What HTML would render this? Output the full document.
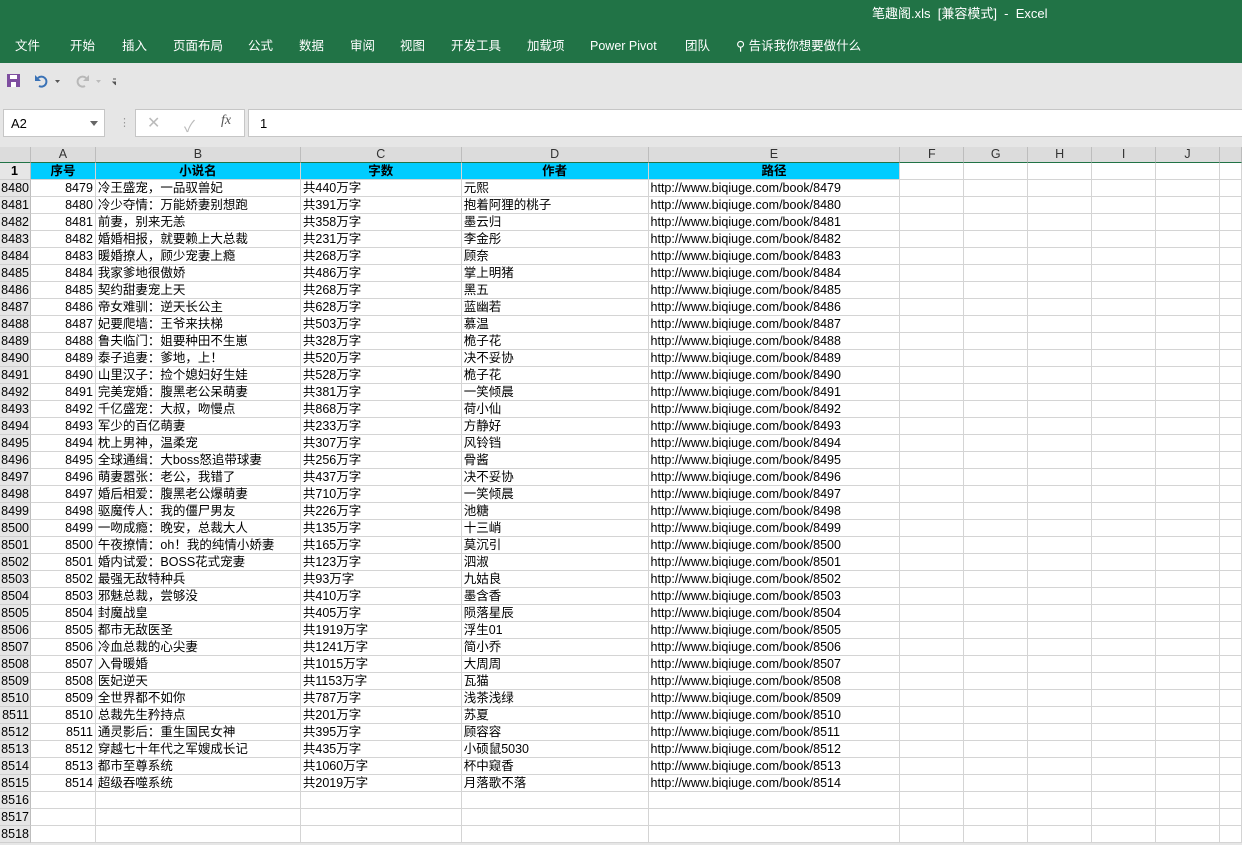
<!DOCTYPE html>
<html><head><meta charset="utf-8"><style>
*{margin:0;padding:0;box-sizing:border-box}
body{width:1242px;height:845px;overflow:hidden;background:#e6e6e6;font-family:"Liberation Sans","Noto Sans CJK SC",sans-serif;position:relative}
.top{position:absolute;left:0;top:0;width:1242px;height:63px;background:#217346;color:#fff}
.title{position:absolute;left:872px;top:6px;font-size:13px;line-height:16px}
.menu{position:absolute;top:38px;font-size:12.5px;white-space:nowrap;line-height:16px;height:16px}
.box{position:absolute;background:#fff;border:1px solid #c6c6c6}
table{position:absolute;left:0;top:147px;border-collapse:separate;border-spacing:0;table-layout:fixed;background:#fff;font-size:12.5px}
td{height:16px;padding:0 2px;border-right:1px solid #d4d4d4;border-bottom:1px solid #d4d4d4;white-space:nowrap;overflow:hidden;line-height:16px;color:#000}
td:first-child{background:#e6e6e6;border-right:1px solid #bdbdbd;border-bottom:1px solid #cfcfcf;text-align:right;padding:0 1px 0 0}
tr.h td{background:#dcdcdc;text-align:center;color:#333;border-bottom:1px solid #217346;height:15px;line-height:15px;border-right:1px solid #bdbdbd}
tr.r1 td{font-weight:bold;text-align:center}
tr.r1 td.c{background:#00ccff}
td.n{text-align:right}
</style></head><body>
<div class="top">
<div class="title">笔趣阁.xls &nbsp;[兼容模式] &nbsp;- &nbsp;Excel</div>
<div class="menu" style="left:15px">文件</div>
<div class="menu" style="left:70px">开始</div>
<div class="menu" style="left:122px">插入</div>
<div class="menu" style="left:173px">页面布局</div>
<div class="menu" style="left:248px">公式</div>
<div class="menu" style="left:299px">数据</div>
<div class="menu" style="left:350px">审阅</div>
<div class="menu" style="left:400px">视图</div>
<div class="menu" style="left:451px">开发工具</div>
<div class="menu" style="left:527px">加载项</div>
<div class="menu" style="left:590px">Power Pivot</div>
<div class="menu" style="left:685px">团队</div>
<div class="menu" style="left:736px">⚲ 告诉我你想要做什么</div>
</div>
<svg style="position:absolute;left:6px;top:73px" width="110" height="16">
<rect x="1" y="1" width="13" height="13" fill="#7e4ea0"/><rect x="4" y="2" width="7" height="4" fill="#fff"/><rect x="5" y="9" width="5" height="5" fill="#fff"/>
<path d="M32 5 a5 5 0 1 1 1 8" stroke="#3a72b6" stroke-width="2" fill="none"/><path d="M29 2 l0 6 l6 0z" fill="#3a72b6"/>
<path d="M49 7 l5 0 l-2.5 3z" fill="#555"/>
<path d="M80 5 a5 5 0 1 0 -1 8" stroke="#b8b8b8" stroke-width="2" fill="none"/><path d="M83 2 l0 6 l-6 0z" fill="#b8b8b8"/>
<path d="M90 7 l5 0 l-2.5 3z" fill="#bbb"/>
<path d="M108 6 h5 M108 9 l2.5 2.5 l2.5 -2.5z" stroke="#555" fill="#555" transform="translate(-1,0)"/>
</svg>
<div class="box" style="left:3px;top:109px;width:102px;height:28px;font-size:13px;padding:6px 7px">A2<span style="position:absolute;right:6px;top:11px;border:4px solid transparent;border-top:5px solid #666"></span></div>
<div style="position:absolute;left:119px;top:116px;color:#999;font-size:11px">⋮</div>
<div class="box" style="left:135px;top:109px;width:110px;height:28px;color:#bbb;font-size:16px"><span style="position:absolute;left:11px;top:3px">✕</span><span style="position:absolute;left:48px;top:3px">✓</span><span style="position:absolute;left:85px;top:3px;color:#555;font-family:'Liberation Serif';font-style:italic;font-size:14px">fx</span></div>
<div class="box" style="left:248px;top:109px;width:1000px;height:28px;font-size:13px;padding:6px 11px">1</div>
<table>
<colgroup><col style="width:31px"><col style="width:65px"><col style="width:205px"><col style="width:161px"><col style="width:187px"><col style="width:252px"><col style="width:64px"><col style="width:64px"><col style="width:64px"><col style="width:64px"><col style="width:64px"><col style="width:22px"></colgroup>
<tr class="h"><td></td><td>A</td><td>B</td><td>C</td><td>D</td><td>E</td><td>F</td><td>G</td><td>H</td><td>I</td><td>J</td><td></td></tr>
<tr class="r1"><td style="text-align:center">1</td><td class="c">序号</td><td class="c">小说名</td><td class="c">字数</td><td class="c">作者</td><td class="c">路径</td><td></td><td></td><td></td><td></td><td></td><td></td></tr>
<tr><td>8480</td><td class="n">8479</td><td>冷王盛宠，一品驭兽妃</td><td>共440万字</td><td>元熙</td><td>http://www.biqiuge.com/book/8479</td><td></td><td></td><td></td><td></td><td></td><td></td></tr>
<tr><td>8481</td><td class="n">8480</td><td>冷少夺情：万能娇妻别想跑</td><td>共391万字</td><td>抱着阿狸的桃子</td><td>http://www.biqiuge.com/book/8480</td><td></td><td></td><td></td><td></td><td></td><td></td></tr>
<tr><td>8482</td><td class="n">8481</td><td>前妻，别来无恙</td><td>共358万字</td><td>墨云归</td><td>http://www.biqiuge.com/book/8481</td><td></td><td></td><td></td><td></td><td></td><td></td></tr>
<tr><td>8483</td><td class="n">8482</td><td>婚婚相报，就要赖上大总裁</td><td>共231万字</td><td>李金彤</td><td>http://www.biqiuge.com/book/8482</td><td></td><td></td><td></td><td></td><td></td><td></td></tr>
<tr><td>8484</td><td class="n">8483</td><td>暖婚撩人，顾少宠妻上瘾</td><td>共268万字</td><td>顾奈</td><td>http://www.biqiuge.com/book/8483</td><td></td><td></td><td></td><td></td><td></td><td></td></tr>
<tr><td>8485</td><td class="n">8484</td><td>我家爹地很傲娇</td><td>共486万字</td><td>掌上明猪</td><td>http://www.biqiuge.com/book/8484</td><td></td><td></td><td></td><td></td><td></td><td></td></tr>
<tr><td>8486</td><td class="n">8485</td><td>契约甜妻宠上天</td><td>共268万字</td><td>黑五</td><td>http://www.biqiuge.com/book/8485</td><td></td><td></td><td></td><td></td><td></td><td></td></tr>
<tr><td>8487</td><td class="n">8486</td><td>帝女难驯：逆天长公主</td><td>共628万字</td><td>蓝幽若</td><td>http://www.biqiuge.com/book/8486</td><td></td><td></td><td></td><td></td><td></td><td></td></tr>
<tr><td>8488</td><td class="n">8487</td><td>妃要爬墙：王爷来扶梯</td><td>共503万字</td><td>慕温</td><td>http://www.biqiuge.com/book/8487</td><td></td><td></td><td></td><td></td><td></td><td></td></tr>
<tr><td>8489</td><td class="n">8488</td><td>鲁夫临门：姐要种田不生崽</td><td>共328万字</td><td>桅子花</td><td>http://www.biqiuge.com/book/8488</td><td></td><td></td><td></td><td></td><td></td><td></td></tr>
<tr><td>8490</td><td class="n">8489</td><td>泰子追妻：爹地，上！</td><td>共520万字</td><td>决不妥协</td><td>http://www.biqiuge.com/book/8489</td><td></td><td></td><td></td><td></td><td></td><td></td></tr>
<tr><td>8491</td><td class="n">8490</td><td>山里汉子：捡个媳妇好生娃</td><td>共528万字</td><td>桅子花</td><td>http://www.biqiuge.com/book/8490</td><td></td><td></td><td></td><td></td><td></td><td></td></tr>
<tr><td>8492</td><td class="n">8491</td><td>完美宠婚：腹黑老公呆萌妻</td><td>共381万字</td><td>一笑倾晨</td><td>http://www.biqiuge.com/book/8491</td><td></td><td></td><td></td><td></td><td></td><td></td></tr>
<tr><td>8493</td><td class="n">8492</td><td>千亿盛宠：大叔，吻慢点</td><td>共868万字</td><td>荷小仙</td><td>http://www.biqiuge.com/book/8492</td><td></td><td></td><td></td><td></td><td></td><td></td></tr>
<tr><td>8494</td><td class="n">8493</td><td>军少的百亿萌妻</td><td>共233万字</td><td>方静好</td><td>http://www.biqiuge.com/book/8493</td><td></td><td></td><td></td><td></td><td></td><td></td></tr>
<tr><td>8495</td><td class="n">8494</td><td>枕上男神，温柔宠</td><td>共307万字</td><td>风铃铛</td><td>http://www.biqiuge.com/book/8494</td><td></td><td></td><td></td><td></td><td></td><td></td></tr>
<tr><td>8496</td><td class="n">8495</td><td>全球通缉：大boss怒追带球妻</td><td>共256万字</td><td>骨酱</td><td>http://www.biqiuge.com/book/8495</td><td></td><td></td><td></td><td></td><td></td><td></td></tr>
<tr><td>8497</td><td class="n">8496</td><td>萌妻嚣张：老公，我错了</td><td>共437万字</td><td>决不妥协</td><td>http://www.biqiuge.com/book/8496</td><td></td><td></td><td></td><td></td><td></td><td></td></tr>
<tr><td>8498</td><td class="n">8497</td><td>婚后相爱：腹黑老公爆萌妻</td><td>共710万字</td><td>一笑倾晨</td><td>http://www.biqiuge.com/book/8497</td><td></td><td></td><td></td><td></td><td></td><td></td></tr>
<tr><td>8499</td><td class="n">8498</td><td>驱魔传人：我的僵尸男友</td><td>共226万字</td><td>池糖</td><td>http://www.biqiuge.com/book/8498</td><td></td><td></td><td></td><td></td><td></td><td></td></tr>
<tr><td>8500</td><td class="n">8499</td><td>一吻成瘾：晚安，总裁大人</td><td>共135万字</td><td>十三峭</td><td>http://www.biqiuge.com/book/8499</td><td></td><td></td><td></td><td></td><td></td><td></td></tr>
<tr><td>8501</td><td class="n">8500</td><td>午夜撩情：oh！我的纯情小娇妻</td><td>共165万字</td><td>莫沉引</td><td>http://www.biqiuge.com/book/8500</td><td></td><td></td><td></td><td></td><td></td><td></td></tr>
<tr><td>8502</td><td class="n">8501</td><td>婚内试爱：BOSS花式宠妻</td><td>共123万字</td><td>泗淑</td><td>http://www.biqiuge.com/book/8501</td><td></td><td></td><td></td><td></td><td></td><td></td></tr>
<tr><td>8503</td><td class="n">8502</td><td>最强无敌特种兵</td><td>共93万字</td><td>九姑良</td><td>http://www.biqiuge.com/book/8502</td><td></td><td></td><td></td><td></td><td></td><td></td></tr>
<tr><td>8504</td><td class="n">8503</td><td>邪魅总裁，尝够没</td><td>共410万字</td><td>墨含香</td><td>http://www.biqiuge.com/book/8503</td><td></td><td></td><td></td><td></td><td></td><td></td></tr>
<tr><td>8505</td><td class="n">8504</td><td>封魔战皇</td><td>共405万字</td><td>陨落星辰</td><td>http://www.biqiuge.com/book/8504</td><td></td><td></td><td></td><td></td><td></td><td></td></tr>
<tr><td>8506</td><td class="n">8505</td><td>都市无敌医圣</td><td>共1919万字</td><td>浮生01</td><td>http://www.biqiuge.com/book/8505</td><td></td><td></td><td></td><td></td><td></td><td></td></tr>
<tr><td>8507</td><td class="n">8506</td><td>冷血总裁的心尖妻</td><td>共1241万字</td><td>简小乔</td><td>http://www.biqiuge.com/book/8506</td><td></td><td></td><td></td><td></td><td></td><td></td></tr>
<tr><td>8508</td><td class="n">8507</td><td>入骨暖婚</td><td>共1015万字</td><td>大周周</td><td>http://www.biqiuge.com/book/8507</td><td></td><td></td><td></td><td></td><td></td><td></td></tr>
<tr><td>8509</td><td class="n">8508</td><td>医妃逆天</td><td>共1153万字</td><td>瓦猫</td><td>http://www.biqiuge.com/book/8508</td><td></td><td></td><td></td><td></td><td></td><td></td></tr>
<tr><td>8510</td><td class="n">8509</td><td>全世界都不如你</td><td>共787万字</td><td>浅茶浅绿</td><td>http://www.biqiuge.com/book/8509</td><td></td><td></td><td></td><td></td><td></td><td></td></tr>
<tr><td>8511</td><td class="n">8510</td><td>总裁先生矜持点</td><td>共201万字</td><td>苏夏</td><td>http://www.biqiuge.com/book/8510</td><td></td><td></td><td></td><td></td><td></td><td></td></tr>
<tr><td>8512</td><td class="n">8511</td><td>通灵影后：重生国民女神</td><td>共395万字</td><td>顾容容</td><td>http://www.biqiuge.com/book/8511</td><td></td><td></td><td></td><td></td><td></td><td></td></tr>
<tr><td>8513</td><td class="n">8512</td><td>穿越七十年代之军嫂成长记</td><td>共435万字</td><td>小硕鼠5030</td><td>http://www.biqiuge.com/book/8512</td><td></td><td></td><td></td><td></td><td></td><td></td></tr>
<tr><td>8514</td><td class="n">8513</td><td>都市至尊系统</td><td>共1060万字</td><td>杯中窥香</td><td>http://www.biqiuge.com/book/8513</td><td></td><td></td><td></td><td></td><td></td><td></td></tr>
<tr><td>8515</td><td class="n">8514</td><td>超级吞噬系统</td><td>共2019万字</td><td>月落歌不落</td><td>http://www.biqiuge.com/book/8514</td><td></td><td></td><td></td><td></td><td></td><td></td></tr>
<tr><td>8516</td><td></td><td></td><td></td><td></td><td></td><td></td><td></td><td></td><td></td><td></td><td></td></tr>
<tr><td>8517</td><td></td><td></td><td></td><td></td><td></td><td></td><td></td><td></td><td></td><td></td><td></td></tr>
<tr><td>8518</td><td></td><td></td><td></td><td></td><td></td><td></td><td></td><td></td><td></td><td></td><td></td></tr>
</table>
</body></html>
